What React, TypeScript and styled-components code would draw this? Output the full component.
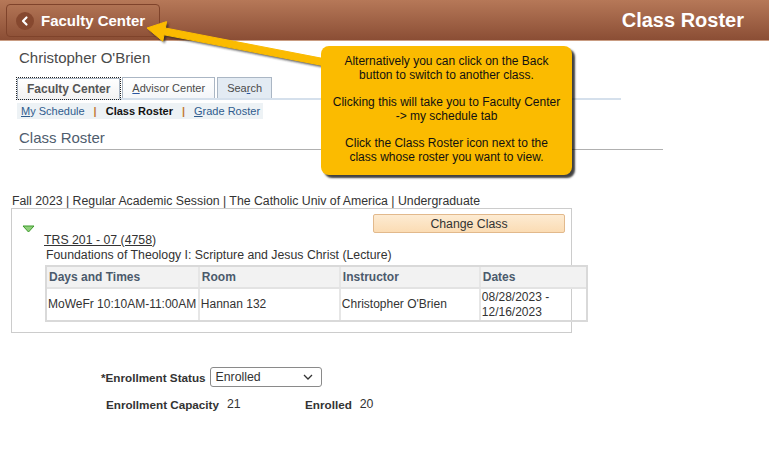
import styled, { createGlobalStyle } from "styled-components";

const GlobalStyle = createGlobalStyle`
  body {
    margin: 0;
    background: #ffffff;
    font-family: "Liberation Sans", Arial, sans-serif;
    color: #333333;
  }
`;

const columns = [
  { label: "Days and Times", width: 152 },
  { label: "Room", width: 142 },
  { label: "Instructor", width: 141 },
  { label: "Dates", width: 108 },
];

const App = () => {
  return (
    <Page>
      <GlobalStyle />
      <Header>
        <BackButton>
          <BackCircle>
            <svg width="16" height="16" viewBox="0 0 16 16">
              <path d="M9.5 4.5 L6 8 L9.5 11.5" fill="none" stroke="#fff" strokeWidth="2.2" strokeLinecap="round" strokeLinejoin="round" />
            </svg>
          </BackCircle>
          Faculty Center
        </BackButton>
        <PageTitle>Class Roster</PageTitle>
      </Header>

      <Top>
        <Name>Christopher O'Brien</Name>
        <TabBar>
          <Tab active>Faculty Center</Tab>
          <Tab>
            <u>A</u>dvisor Center
          </Tab>
          <Tab tint>
            Sea<u>r</u>ch
          </Tab>
        </TabBar>
        <SubNav>
          <SubLink>
            <u>M</u>y Schedule
          </SubLink>
          <Sep>|</Sep>
          <SubCurrent>Class Roster</SubCurrent>
          <Sep>|</Sep>
          <SubLink>
            <u>G</u>rade Roster
          </SubLink>
        </SubNav>
        <SectionTitle>Class Roster</SectionTitle>
      </Top>

      <Term>Fall 2023 | Regular Academic Session | The Catholic Univ of America | Undergraduate</Term>

      <ClassBox>
        <BoxTop>
          <svg width="13" height="8" viewBox="0 0 13 8" style={{ marginTop: 11 }}>
            <path d="M1 1 L12 1 L6.5 7 Z" fill="#8fd07a" stroke="#3c9a2c" strokeWidth="1" />
          </svg>
          <ChangeButton>Change Class</ChangeButton>
        </BoxTop>
        <BoxBody>
          <ClassLink>
            <u>TRS 201 - 07 (4758</u>)
          </ClassLink>
          <ClassDesc>Foundations of Theology I: Scripture and Jesus Christ (Lecture)</ClassDesc>
          <Grid>
            <GridRow>
              {columns.map((c) => (
                <HeadCell key={c.label} style={{ width: c.width }}>
                  {c.label}
                </HeadCell>
              ))}
            </GridRow>
            <GridRow>
              <DataCell style={{ width: 152 }}>MoWeFr 10:10AM-11:00AM</DataCell>
              <DataCell style={{ width: 142 }}>Hannan 132</DataCell>
              <DataCell style={{ width: 141 }}>Christopher O'Brien</DataCell>
              <DataCell style={{ width: 108 }}>
                08/28/2023 -<br />
                12/16/2023
              </DataCell>
            </GridRow>
          </Grid>
        </BoxBody>
      </ClassBox>

      <Enrollment>
        <StatusRow>
          <Label>*Enrollment Status</Label>
          <Select>
            Enrolled
            <svg width="10" height="6" viewBox="0 0 10 6">
              <path d="M1 1 L5 5 L9 1" fill="none" stroke="#333" strokeWidth="1.3" />
            </svg>
          </Select>
        </StatusRow>
        <CountRow>
          <Label>Enrollment Capacity</Label>
          <Value wide>21</Value>
          <Label>Enrolled</Label>
          <Value>20</Value>
        </CountRow>
      </Enrollment>

      <Arrow width="769" height="100" viewBox="0 0 769 100">
        <defs>
          <filter id="sh" x="-10%" y="-50%" width="120%" height="200%">
            <feGaussianBlur stdDeviation="1" />
          </filter>
        </defs>
        <polygon
          points="149,30 168.6,23.6 167.4,30 330.7,61.6 329.3,68.4 166,36.8 164.8,43.2"
          fill="#222"
          opacity="0.75"
          filter="url(#sh)"
        />
        <polygon
          points="147,28 166.6,21.6 165.4,28 328.7,59.6 327.3,66.4 164,34.8 162.8,41.2"
          fill="#fbbb00"
          stroke="#fbbb00"
          strokeLinejoin="round"
          strokeWidth="1"
        />
      </Arrow>

      <Callout>
        <p>
          Alternatively you can click on the Back
          <br />
          button to switch to another class.
        </p>
        <p>
          Clicking this will take you to Faculty Center
          <br />
          -&gt; my schedule tab
        </p>
        <p>
          Click the Class Roster icon next to the
          <br />
          class whose roster you want to view.
        </p>
      </Callout>
    </Page>
  );
};

const Page = styled.div`
  position: relative;
  width: 769px;
  height: 456px;
  overflow: hidden;
`;

const Header = styled.header`
  height: 40px;
  display: flex;
  align-items: center;
  justify-content: space-between;
  padding: 0 25px 0 6px;
  background: linear-gradient(#b67858, #8b4e35);
  border-bottom: 1px solid #c99c82;
`;

const BackButton = styled.div`
  display: flex;
  align-items: center;
  gap: 7px;
  height: 33px;
  width: 154px;
  box-sizing: border-box;
  margin-top: 1px;
  padding-left: 9px;
  border: 1px solid #7f432b;
  border-radius: 4px;
  color: #ffffff;
  font-size: 15px;
  font-weight: bold;
`;

const BackCircle = styled.span`
  display: flex;
  width: 18px;
  height: 18px;
  border-radius: 50%;
  background: #86482f;
  align-items: center;
  justify-content: center;
`;

const PageTitle = styled.h1`
  margin: 0;
  color: #ffffff;
  font-size: 20px;
  font-weight: bold;
`;

const Top = styled.div`
  padding: 8px 0 0 17px;
`;

const Name = styled.div`
  padding-left: 2px;
  font-size: 15px;
  line-height: 18px;
  color: #4a4a4a;
`;

const TabBar = styled.div`
  display: flex;
  align-items: flex-end;
  gap: 2px;
  width: 604px;
  height: 21px;
  margin-top: 10px;
  border-bottom: 2px solid #d5e0ec;
`;

const Tab = styled.div<{ active?: boolean; tint?: boolean }>`
  height: 21px;
  box-sizing: border-box;
  padding: 0 9px;
  margin-bottom: ${(p) => (p.active ? -1 : 0)}px;
  display: flex;
  align-items: center;
  white-space: nowrap;
  font-size: ${(p) => (p.active ? 12 : 11)}px;
  font-weight: ${(p) => (p.active ? "bold" : "normal")};
  color: ${(p) => (p.active ? "#555555" : "#4a4a4a")};
  background: ${(p) =>
    p.active ? "linear-gradient(#ffffff, #f2f2f2)" : p.tint ? "#e3ebf3" : "linear-gradient(#ffffff, #f4f6f9)"};
  border: 1px solid #aab6c4;
  border-bottom: none;
  outline: ${(p) => (p.active ? "1px dotted #222" : "none")};
  & u {
    text-decoration-color: #2a55a0;
  }
`;

const SubNav = styled.div`
  display: flex;
  align-items: center;
  gap: 9px;
  width: 246px;
  height: 16px;
  margin-top: 3px;
  padding-left: 4px;
  box-sizing: border-box;
  background: #edf2f5;
  font-size: 11px;
  white-space: nowrap;
  & > * {
    flex-shrink: 0;
  }
`;

const SubLink = styled.span`
  color: #2f5c8e;
`;

const SubCurrent = styled.span`
  color: #111111;
  font-weight: bold;
`;

const Sep = styled.span`
  color: #c37a39;
  font-weight: bold;
`;

const SectionTitle = styled.div`
  width: 644px;
  margin: 10px 0 0 2px;
  padding-bottom: 2px;
  font-size: 15px;
  line-height: 18px;
  color: #4f5d6e;
  border-bottom: 1px solid #b0b0b0;
`;

const Term = styled.div`
  margin: 44px 0 0 12px;
  font-size: 12.3px;
  line-height: 14px;
  color: #333333;
  white-space: nowrap;
`;

const ClassBox = styled.section`
  width: 561px;
  height: 125px;
  box-sizing: border-box;
  margin: 0 0 0 11px;
  border: 1px solid #cccccc;
`;

const BoxTop = styled.div`
  display: flex;
  align-items: flex-start;
  justify-content: space-between;
  padding: 5px 6px 0 10px;
`;

const ChangeButton = styled.div`
  width: 192px;
  height: 19px;
  box-sizing: border-box;
  display: flex;
  align-items: center;
  justify-content: center;
  font-size: 12.3px;
  color: #333333;
  background: linear-gradient(#fdebd2, #fbdcb4);
  border: 1px solid #e2b98c;
  border-radius: 2px;
`;

const BoxBody = styled.div`
  padding-left: 32px;
`;

const ClassLink = styled.div`
  font-size: 12.3px;
  line-height: 15px;
  color: #333333;
`;

const ClassDesc = styled.div`
  font-size: 12.3px;
  line-height: 15px;
  padding-left: 2px;
  color: #333333;
`;

const Grid = styled.div`
  width: 543px;
  margin: 2px 0 0 1px;
  border: 2px solid #d9d9d9;
  box-sizing: border-box;
`;

const GridRow = styled.div`
  display: flex;
  & + & {
    border-top: 2px solid #e3e3e3;
  }
`;

const HeadCell = styled.div`
  box-sizing: border-box;
  height: 20px;
  display: flex;
  align-items: center;
  padding-left: 2px;
  background: #f2f2f2;
  font-size: 12px;
  font-weight: bold;
  color: #4b5a6c;
  white-space: nowrap;
  & + & {
    border-left: 2px solid #e6e6e6;
  }
`;

const DataCell = styled.div`
  box-sizing: border-box;
  height: 31px;
  display: flex;
  align-items: center;
  padding-left: 1px;
  font-size: 12px;
  line-height: 15px;
  color: #333333;
  white-space: nowrap;
  & + & {
    border-left: 2px solid #e6e6e6;
  }
`;

const Enrollment = styled.div`
  margin: 34px 0 0 101px;
  display: flex;
  flex-direction: column;
  gap: 10px;
`;

const StatusRow = styled.div`
  display: flex;
  align-items: center;
  gap: 4px;
`;

const CountRow = styled.div`
  display: flex;
  align-items: center;
  padding-left: 5px;
`;

const Label = styled.span`
  font-size: 11.7px;
  font-weight: bold;
  color: #333333;
  white-space: nowrap;
`;

const Value = styled.span<{ wide?: boolean }>`
  font-size: 12.3px;
  color: #333333;
  margin-left: 8px;
  width: ${(p) => (p.wide ? 78 : 20)}px;
`;

const Select = styled.div`
  width: 112px;
  height: 20px;
  box-sizing: border-box;
  display: flex;
  align-items: center;
  justify-content: space-between;
  padding: 0 8px 0 5px;
  font-size: 12.3px;
  color: #333333;
  border: 1px solid #8a8a8a;
  border-radius: 3px;
  background: #ffffff;
`;

const Arrow = styled.svg`
  position: absolute;
  left: 0;
  top: 0;
  pointer-events: none;
`;

const Callout = styled.div`
  position: absolute;
  left: 321px;
  top: 46px;
  width: 251px;
  height: 129px;
  box-sizing: border-box;
  padding-top: 9px;
  background: #fbbb00;
  border-radius: 8px;
  box-shadow: 3px 3px 2px rgba(0, 0, 0, 0.75);
  font-size: 12px;
  line-height: 13.5px;
  text-align: center;
  color: #111111;
  & p {
    margin: 0 0 14px;
  }
`;

export default App;
